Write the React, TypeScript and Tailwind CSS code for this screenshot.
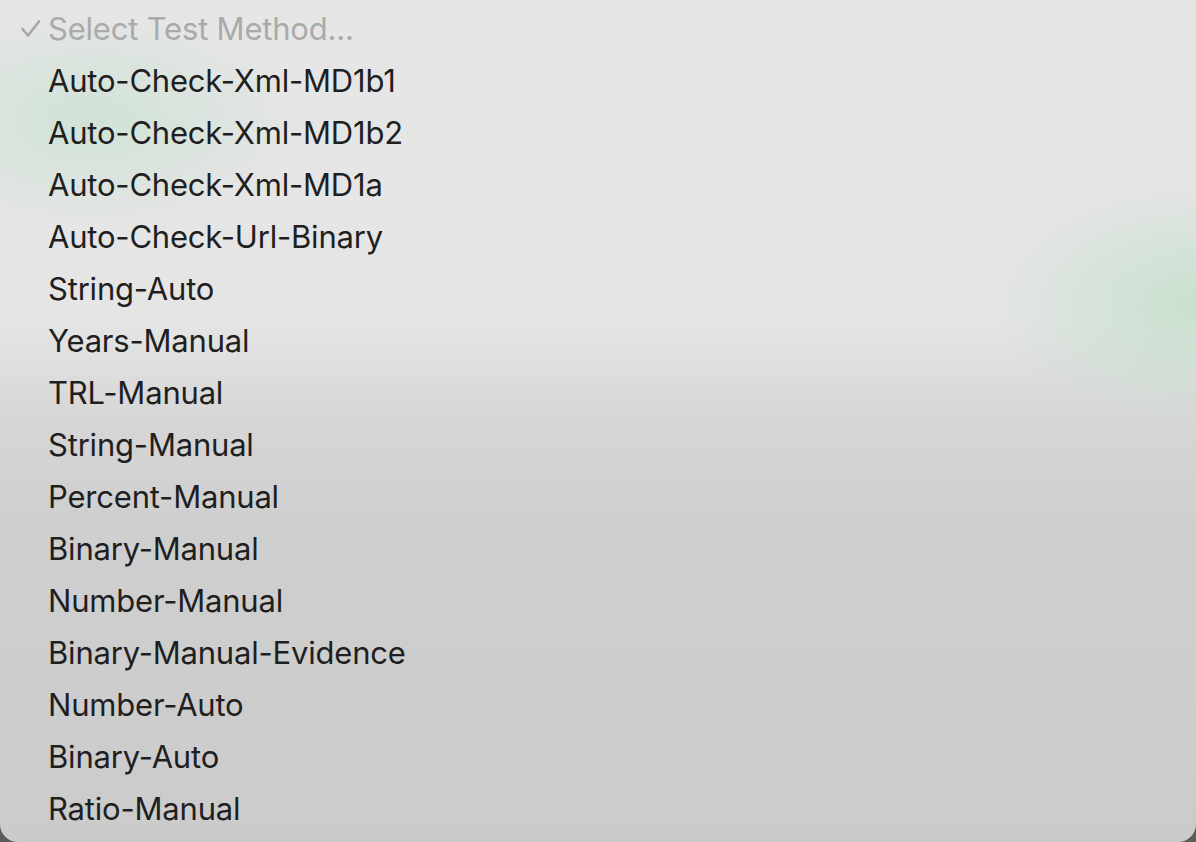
import React from "react";

const methods: string[] = [
    "Auto-Check-Xml-MD1b1",
    "Auto-Check-Xml-MD1b2",
    "Auto-Check-Xml-MD1a",
    "Auto-Check-Url-Binary",
    "String-Auto",
    "Years-Manual",
    "TRL-Manual",
    "String-Manual",
    "Percent-Manual",
    "Binary-Manual",
    "Number-Manual",
    "Binary-Manual-Evidence",
    "Number-Auto",
    "Binary-Auto",
    "Ratio-Manual",
];

function Check() {
    return (
        <svg width="20" height="18" viewBox="0 0 20 18" className="shrink-0">
            <polyline points="1.5,9 7,15.5 18,1.5" fill="none" stroke="#a6a6a6" strokeWidth="2.6" strokeLinecap="round" strokeLinejoin="round" />
        </svg>
    );
}

export default function App() {
    return (
        <div className="w-full h-[842px] bg-[#5c5c5c] overflow-hidden" style={{ fontFamily: "Inter, 'Liberation Sans', sans-serif" }}>
            <div className="relative w-full h-full rounded-b-[18px] overflow-hidden bg-[linear-gradient(180deg,#e6e6e6_0%,#e5e5e5_38%,#d6d6d6_50%,#cfcfcf_62%,#cbcbcb_100%)]">
                <div className="absolute -left-[120px] top-[10px] w-[420px] h-[220px] rounded-full bg-[radial-gradient(closest-side,rgba(200,225,208,0.75),rgba(200,225,208,0))]" />
                <div className="absolute left-[990px] top-[180px] w-[420px] h-[250px] rounded-full bg-[radial-gradient(closest-side,rgba(196,224,204,0.9),rgba(196,224,204,0))]" />
                <ul className="relative flex flex-col pt-[3px]">
                    <li className="h-[52px] flex items-center">
                        <span className="w-[48px] flex justify-end pr-[7px]"><Check /></span>
                        <span className="text-[31px] tracking-[-0.2px] text-[#aaaaaa]">Select Test Method...</span>
                    </li>
                    {methods.map((m) => (
                        <li key={m} className="h-[52px] flex items-center pl-[48px] text-[31px] tracking-[-0.2px] text-[#1f1f1f]">
                            {m}
                        </li>
                    ))}
                </ul>
            </div>
        </div>
    );
}
